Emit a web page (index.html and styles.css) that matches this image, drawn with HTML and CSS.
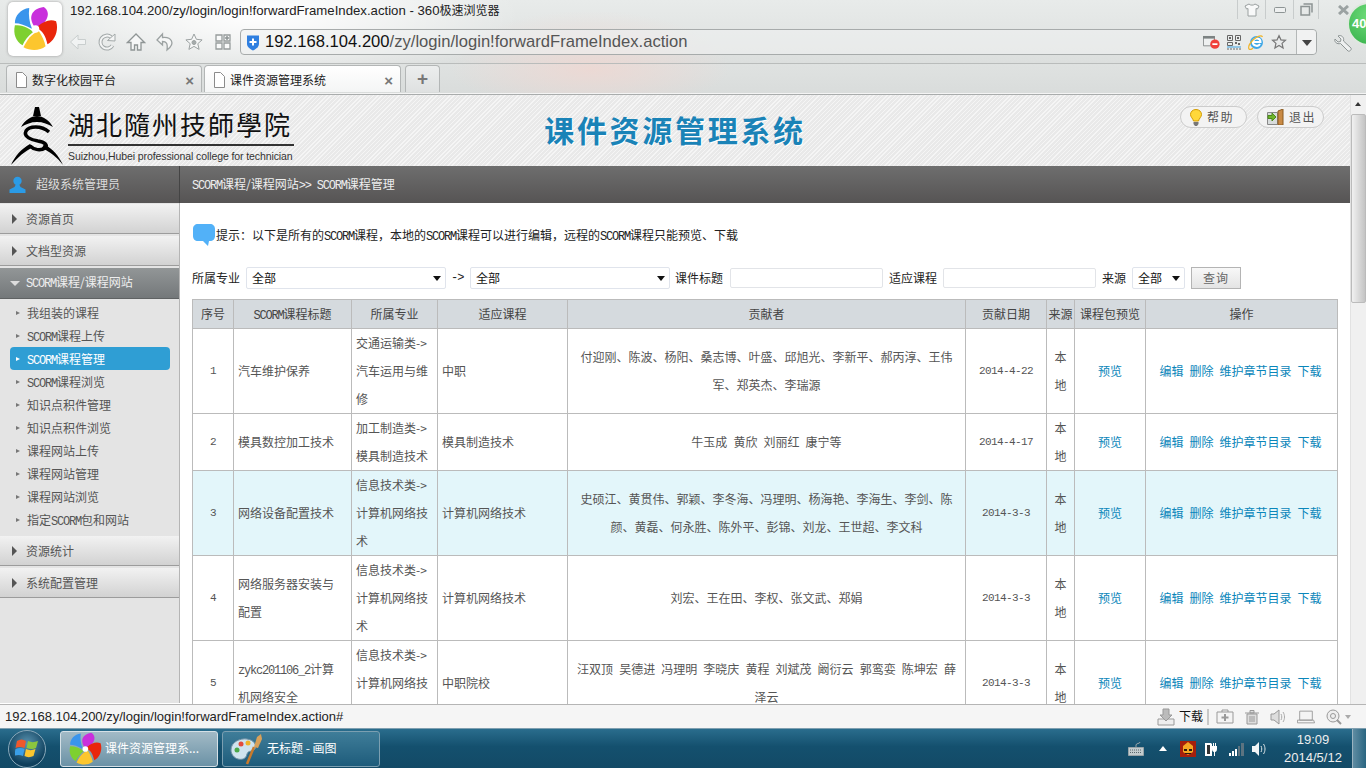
FILE: index.html
```html
<!DOCTYPE html>
<html lang="zh-CN">
<head>
    <meta charset="UTF-8">
    <title>课件资源管理系统</title>
    <link rel="stylesheet" href="styles.css">
</head>
<body>
    <svg class="defs" width="0" height="0">
        <symbol id="pinwheel" viewBox="0 0 48 48">
            <path fill="#c92fdc" d="M23 21C17 12 20 3 33 1c7 4 6 15-6 21z"/>
            <path fill="#e9260b" d="M27 21c6-5 13-8 19-5 3 9-1 20-9 24-2-9-5-14-10-16z"/>
            <path fill="#fcc62e" d="M28 26c3 5 6 10 7 16-6 5-16 5-23 1 4-8 8-14 16-17z"/>
            <path fill="#7ed02f" d="M22 27c-5 4-9 9-11 14C4 37 1 29 3 20c7 0 14 2 19 7z"/>
            <path fill="#3a95ec" d="M21 24C14 20 8 18 3 18 3 10 9 3 18 2c-1 7 0 15 3 22z"/>
            <circle cx="24.500" cy="24" r="4" fill="#fff"/>
        </symbol>
        <symbol id="star" viewBox="0 0 20 20">
            <path d="M10 2l2.400 5.300 5.700.6-4.300 3.800 1.300 5.700L10 14.400l-5.100 3 1.300-5.700L1.900 7.900l5.700-.6z"/>
        </symbol>
    </svg>

    <div class="browser-top">
        <div class="app-logo"><svg width="46" height="46"><use href="#pinwheel"/></svg></div>
        <div class="browser-main">
            <div class="title-row">
                <span class="title-text">192.168.104.200/zy/login/login!forwardFrameIndex.action - 360<span class="title-cn">极速浏览器</span></span>
                <div class="win-btns">
                    <span class="win-btn"><svg width="16" height="14" viewBox="0 0 16 14"><path fill="#f8f9f9" stroke="#9aa0a0" d="M5 1L1 3l1.500 3L4 5.500V13h8V5.500l1.500.5L15 3l-4-2c-1 1.500-5 1.500-6 0z"/></svg></span>
                    <span class="win-btn"><svg width="12" height="6" viewBox="0 0 12 6"><rect x=".5" y=".5" width="11" height="5" rx="1" fill="#eef0f0" stroke="#8d9494"/></svg></span>
                    <span class="win-btn win-btn-last"><svg width="13" height="13" viewBox="0 0 13 13"><path fill="none" stroke="#8d9494" stroke-width="1.500" d="M3.500 1h8.500v8.500M1 3.500h8.500V12H1z"/></svg></span>
                    <span class="win-close"><svg width="11" height="10" viewBox="0 0 11 10"><path stroke="#9ba2a2" stroke-width="3" d="M1 1l9 8M10 1L1 9"/></svg></span>
                </div>
            </div>
            <div class="tool-row">
                <div class="nav-icons">
                    <svg width="20" height="20" viewBox="0 0 20 20"><path fill="#f1f3f3" stroke="#c9cece" d="M10 3L2.500 10l7.500 7v-4.500h7.500v-5H10z"/></svg>
                    <svg width="20" height="20" viewBox="0 0 20 20"><path fill="none" stroke="#a3a9a9" stroke-width="4" d="M15.500 13.500A6.500 6.500 0 1 1 14 5"/><path fill="none" stroke="#f4f5f5" stroke-width="2" d="M15.500 13.500A6.500 6.500 0 1 1 14 5"/><path fill="#f4f5f5" stroke="#a3a9a9" d="M10.500 8.500L18 9V2z"/></svg>
                    <svg width="20" height="20" viewBox="0 0 20 20"><path fill="#f6f7f7" stroke="#8f9595" stroke-width="1.300" d="M10 2L1.500 10.500H5V18h3.500v-5h3v5H15v-7.500h3.500z"/></svg>
                    <svg width="20" height="20" viewBox="0 0 20 20"><path fill="#f6f7f7" stroke="#9ca2a2" stroke-width="1.300" d="M7.500 2L2 8l5.500 5V9.500c3.500 0 5.500 1.500 4.500 8.500 4-3 6-6 4.500-9-1.500-3-5-4-9-3.500z"/></svg>
                    <svg width="20" height="20" viewBox="0 0 20 20" class="star-icon"><use href="#star"/><circle cx="10" cy="10.500" r="2" fill="#a5abab"/></svg>
                    <svg width="20" height="20" viewBox="0 0 20 20"><path fill="#f9fafa" stroke="#969c9c" stroke-width="1.300" d="M3 3h6v6H3zM3 11h6v6H3zM11 11h6v6h-6zM11 3h6v6h-6z"/><path stroke="#8f9595" stroke-width="1.500" d="M14 4v4M12 6h4"/></svg>
                </div>
                <div class="address">
                    <svg class="shield" width="14" height="17" viewBox="0 0 14 17"><path fill="#2f7fe0" d="M1 1.500h12V10c0 3-3 5-6 6.500C4 15 1 13 1 10z"/><path stroke="#fff" stroke-width="2" d="M7 4.500v7M3.500 8h7"/></svg>
                    <span class="url"><b>192.168.104.200</b>/zy/login/login!forwardFrameIndex.action</span>
                    <div class="address-icons">
                        <svg width="17" height="14" viewBox="0 0 20 16"><path fill="#eef0f0" stroke="#7c8282" d="M.5 1.500h13v11H.5z"/><path fill="#7c8282" d="M0 1h14v3H0z"/><circle cx="14" cy="10.500" r="5.500" fill="#f0403a"/><path stroke="#fff" stroke-width="2" d="M11 10.500h6"/></svg>
                        <svg width="14" height="15" viewBox="0 0 14 15"><path fill="none" stroke="#666" d="M.5.500h5v5h-5zM8.500.500h5v5h-5zM.5 7.500h5v3h-5z"/><path fill="#666" d="M2 2h2v2H2zM10 2h2v2h-2zM8 7h2v2H8zM11 8h2v2h-2z"/><path stroke="#3aa0e0" d="M0 12h14"/><path stroke="#666" stroke-dasharray="2 1" d="M0 14h14"/></svg>
                        <svg width="16" height="16" viewBox="0 0 16 16"><circle cx="8.500" cy="8.500" r="6.500" fill="#3ea7e6"/><path fill="none" stroke="#fff" stroke-width="2" d="M4.500 8h8c0-4-6-5-7.500-.5-1 4 5 6 7 2.500"/><path fill="none" stroke="#f0b429" stroke-width="1.200" d="M14.500 3c-1-2-5-1-9 2.500C2 9 0 13 1 15c1 1 3 0 4-1"/></svg>
                        <svg width="16" height="16" viewBox="0 0 20 20" class="addr-star"><use href="#star"/></svg>
                    </div>
                    <span class="address-drop"></span>
                </div>
                <div class="wrench-box">
                    <svg width="18" height="18" viewBox="0 0 18 18"><path fill="#eef0f0" stroke="#8d9494" d="M1 4l3 3 2.500-.5L7 4 4 1c3-1.500 6.500 1 5.500 5L17 13c1 1.500-1.500 4-3 3L6.500 8.500C3 9.500 0 7 1 4z"/></svg>
                </div>
            </div>
        </div>
        <div class="badge">40</div>
    </div>

    <div class="tab-row">
        <div class="tab">
            <svg width="11" height="16" viewBox="0 0 11 16"><path fill="#fff" stroke="#8b8b8b" d="M.5.500h6l4 4v11H.5z"/></svg>
            <span class="tab-name">数字化校园平台</span><span class="tab-x">×</span>
        </div>
        <div class="tab tab-on">
            <svg width="11" height="16" viewBox="0 0 11 16"><path fill="#fff" stroke="#8b8b8b" d="M.5.500h6l4 4v11H.5z"/></svg>
            <span class="tab-name">课件资源管理系统</span><span class="tab-x">×</span>
        </div>
        <div class="tab-add">+</div>
    </div>

    <div class="page">
        <div class="site">
            <header class="site-head">
                <div class="school">
                    <svg class="emblem" width="52" height="58" viewBox="0 0 52 58">
                        <path d="M24 0h4l2 9h-8z"/>
                        <path d="M10 20C14 13 20 9 26 9s12 4 16 11c-5-3-10-5-16-5s-11 2-16 5z"/>
                        <path fill="none" stroke="#000" stroke-width="3.500" d="M38 25C30 18 18 19 15 24c-3 6 6 9 12 10 7 1 10 4 7 7-4 3-11 2-15-2"/>
                        <path d="M0 58c4-9 10-16 19-21l3 3c-8 4-15 10-22 18z"/>
                        <path d="M52 58c-4-9-10-16-19-21l-2 4c8 4 15 9 21 17z"/>
                    </svg>
                    <div class="school-name">
                        <div class="school-cn">湖北隨州技師學院</div>
                        <div class="school-en">Suizhou,Hubei professional college for technician</div>
                    </div>
                </div>
                <h1 class="sys-title">课件资源管理系统</h1>
                <div class="head-btns">
                    <a class="pill">
                        <svg width="12" height="17" viewBox="0 0 12 17"><path fill="#ffd83a" stroke="#d29a00" d="M6 .5C2.500.5.500 3 .5 5.500.5 8 3 9.500 3.500 12h5C9 9.500 11.500 8 11.500 5.500 11.500 3 9.500.5 6 .5z"/><path fill="#777" d="M3.500 13h5v2l-1.500 2H5l-1.500-2z"/></svg>
                        <span>帮助</span>
                    </a>
                    <a class="pill">
                        <svg width="17" height="16" viewBox="0 0 17 16"><path fill="#d8dcdc" stroke="#888" d="M.5 3.500h10v12H.5z"/><path fill="#c98a45" stroke="#8a5a20" d="M11 2l5-2v16h-5z"/><path fill="#6fb52c" stroke="#4c8a1a" d="M1 6.500h4V4l4 4-4 4V9.500H1z"/></svg>
                        <span>退出</span>
                    </a>
                </div>
            </header>

            <div class="layout">
                <aside class="side">
                    <div class="user-bar">
                        <svg width="17" height="17" viewBox="0 0 17 17"><circle cx="8.500" cy="5" r="4.200" fill="#2b9be6"/><path fill="#2b9be6" d="M6.500 9h4l1 2 5 2.500V17H.5v-3.500l5-2.500z"/></svg>
                        <span>超级系统管理员</span>
                    </div>
                    <div class="menu-head"><i class="tri"></i>资源首页</div>
                    <div class="menu-head"><i class="tri"></i>文档型资源</div>
                    <div class="menu-head menu-open"><i class="tri-down"></i><span><span class="en">SCORM</span>课程/课程网站</span></div>
                    <ul class="sub-menu">
                        <li>我组装的课程</li>
                        <li><span class="en">SCORM</span>课程上传</li>
                        <li class="sub-on"><span class="en">SCORM</span>课程管理</li>
                        <li><span class="en">SCORM</span>课程浏览</li>
                        <li>知识点积件管理</li>
                        <li>知识点积件浏览</li>
                        <li>课程网站上传</li>
                        <li>课程网站管理</li>
                        <li>课程网站浏览</li>
                        <li>指定<span class="en">SCORM</span>包和网站</li>
                    </ul>
                    <div class="menu-head"><i class="tri"></i>资源统计</div>
                    <div class="menu-head"><i class="tri"></i>系统配置管理</div>
                </aside>

                <main class="content">
                    <div class="crumb"><span class="en">SCORM</span>课程/课程网站<span class="en">&gt;&gt; SCORM</span>课程管理</div>
                    <div class="content-in">
                        <div class="tip">
                            <svg width="24" height="24" viewBox="0 0 24 24"><path fill="#52b1f8" d="M6 1h12c3 0 5 2 5 5v7c0 3-2 5-5 5h-1l-1 5-5-5H6c-3 0-5-2-5-5V6c0-3 2-5 5-5z"/></svg>
                            <span class="tip-text">提示：以下是所有的<span class="en">SCORM</span>课程，本地的<span class="en">SCORM</span>课程可以进行编辑，远程的<span class="en">SCORM</span>课程只能预览、下载</span>
                        </div>
                        <form class="filter">
                            <label>所属专业</label>
                            <div class="select select-lg"><select><option>全部</option></select></div>
                            <span class="arrow-text">-&gt;</span>
                            <div class="select select-lg"><select><option>全部</option></select></div>
                            <label>课件标题</label>
                            <input class="field" type="text">
                            <label>适应课程</label>
                            <input class="field" type="text">
                            <label>来源</label>
                            <div class="select select-sm"><select><option>全部</option></select></div>
                            <button class="query" type="button">查询</button>
                        </form>
                        <table class="grid">
                            <colgroup>
                                <col class="c1"><col class="c2"><col class="c3"><col class="c4"><col class="c5"><col class="c6"><col class="c7"><col class="c8"><col class="c9">
                            </colgroup>
                            <thead>
                                <tr>
                                    <th>序号</th><th><span class="en">SCORM</span>课程标题</th><th>所属专业</th><th>适应课程</th><th>贡献者</th><th>贡献日期</th><th>来源</th><th>课程包预览</th><th>操作</th>
                                </tr>
                            </thead>
                            <tbody>
                                <tr>
                                    <td class="en mid">1</td><td class="left">汽车维护保养</td><td class="left">交通运输类-&gt;汽车运用与维修</td><td class="left">中职</td>
                                    <td class="mid who">付迎刚、陈波、杨阳、桑志博、叶盛、邱旭光、李新平、郝丙淳、王伟军、郑英杰、李瑞源</td>
                                    <td class="en mid">2014-4-22</td><td class="mid src">本地</td><td class="mid"><a>预览</a></td>
                                    <td class="mid ops"><a>编辑</a><a>删除</a><a>维护章节目录</a><a>下载</a></td>
                                </tr>
                                <tr>
                                    <td class="en mid">2</td><td class="left">模具数控加工技术</td><td class="left">加工制造类-&gt;模具制造技术</td><td class="left">模具制造技术</td>
                                    <td class="mid who">牛玉成 黄欣 刘丽红 康宁等</td>
                                    <td class="en mid">2014-4-17</td><td class="mid src">本地</td><td class="mid"><a>预览</a></td>
                                    <td class="mid ops"><a>编辑</a><a>删除</a><a>维护章节目录</a><a>下载</a></td>
                                </tr>
                                <tr class="row-hot">
                                    <td class="en mid">3</td><td class="left">网络设备配置技术</td><td class="left">信息技术类-&gt;计算机网络技术</td><td class="left">计算机网络技术</td>
                                    <td class="mid who">史硕江、黄贯伟、郭颖、李冬海、冯理明、杨海艳、李海生、李剑、陈颜、黄磊、何永胜、陈外平、彭锦、刘龙、王世超、李文科</td>
                                    <td class="en mid">2014-3-3</td><td class="mid src">本地</td><td class="mid"><a>预览</a></td>
                                    <td class="mid ops"><a>编辑</a><a>删除</a><a>维护章节目录</a><a>下载</a></td>
                                </tr>
                                <tr>
                                    <td class="en mid">4</td><td class="left">网络服务器安装与配置</td><td class="left">信息技术类-&gt;计算机网络技术</td><td class="left">计算机网络技术</td>
                                    <td class="mid who">刘宏、王在田、李权、张文武、郑娟</td>
                                    <td class="en mid">2014-3-3</td><td class="mid src">本地</td><td class="mid"><a>预览</a></td>
                                    <td class="mid ops"><a>编辑</a><a>删除</a><a>维护章节目录</a><a>下载</a></td>
                                </tr>
                                <tr>
                                    <td class="en mid">5</td><td class="left"><span class="en">zykc201106_2</span>计算机网络安全</td><td class="left">信息技术类-&gt;计算机网络技术</td><td class="left">中职院校</td>
                                    <td class="mid who">汪双顶 吴德进 冯理明 李晓庆 黄程 刘斌茂 阚衍云 郭鸾娈 陈坤宏 薛泽云</td>
                                    <td class="en mid">2014-3-3</td><td class="mid src">本地</td><td class="mid"><a>预览</a></td>
                                    <td class="mid ops"><a>编辑</a><a>删除</a><a>维护章节目录</a><a>下载</a></td>
                                </tr>
                            </tbody>
                        </table>
                    </div>
                </main>
            </div>
        </div>
        <div class="scrollbar">
            <div class="scroll-up"></div>
            <div class="scroll-thumb"></div>
        </div>
    </div>

    <div class="status">
        <span class="status-url">192.168.104.200/zy/login/login!forwardFrameIndex.action#</span>
        <div class="status-tools">
            <svg width="18" height="18" viewBox="0 0 18 18"><path fill="#eee" stroke="#999" d="M1 11h16v6H1z"/><path fill="#bbb" stroke="#999" d="M6 1h6v6h3l-6 6-6-6h3z"/></svg>
            <span class="dl-text">下载</span>
            <i class="status-sep"></i>
            <svg width="18" height="15" viewBox="0 0 18 15"><path fill="#f4f4f4" stroke="#999" d="M1 3h16v11H1zM6 3V1h6v2"/><path stroke="#999" stroke-width="2" d="M9 5v7M5.500 8.500h7"/></svg>
            <svg width="14" height="16" viewBox="0 0 14 16"><path fill="#ddd" stroke="#999" d="M2 5h10v10H2zM0 4h14M5 1.500h4V4H5z"/><path stroke="#999" d="M5 7v6M7 7v6M9 7v6"/></svg>
            <svg width="16" height="16" viewBox="0 0 16 16"><path fill="#ddd" stroke="#999" d="M1 5h3l5-4v14l-5-4H1z"/><path fill="none" stroke="#aaa" d="M11 5c1 2 1 4 0 6M13 3c2 3 2 7 0 10"/></svg>
            <svg width="18" height="14" viewBox="0 0 20 14"><path fill="#f4f4f4" stroke="#999" d="M3 .5h14v10H3zM.5 10.500h18l1 3H.5z"/></svg>
            <svg width="16" height="16" viewBox="0 0 16 16"><circle cx="7" cy="7" r="6" fill="#eee" stroke="#999"/><circle cx="7" cy="7" r="2.500" fill="none" stroke="#999"/><path stroke="#999" stroke-width="2" d="M11 11l4 4"/></svg>
            <i class="status-caret"></i>
        </div>
    </div>

    <footer class="taskbar">
        <div class="start-orb">
            <svg width="24" height="22" viewBox="0 0 24 22"><path fill="#f0582c" d="M2 3c3-2 6-2 9 0l-1.500 7c-3-1.500-6-1.500-9 0z"/><path fill="#8cc63f" d="M13 3c3 1.500 6 1.500 10 0l-2 7c-3 1.500-6 1-9.500 0z"/><path fill="#3a9fe8" d="M.5 11c3-1.500 6-1.500 9 0L8 18c-3-1.500-6-1.500-9 0z"/><path fill="#fcc62e" d="M11 11c3 1.500 6 1.500 9.500 0l-2 7c-3 1.500-6.500 1.500-9 0z"/></svg>
        </div>
        <div class="task task-on">
            <svg width="34" height="34"><use href="#pinwheel"/></svg>
            <span>课件资源管理系...</span>
        </div>
        <div class="task">
            <svg width="34" height="32" viewBox="0 0 34 32"><path fill="#cfe3ee" stroke="#6f8fa3" d="M1 17C1 9 10 5 17 6c7 1 10 6 8 10-2 3-7 1-8 5-1 5-5 6-9 5-4-1-7-5-7-9z"/><circle cx="7" cy="17" r="2.500" fill="#4aa84a"/><circle cx="11" cy="11" r="2.500" fill="#e24c3c"/><circle cx="18" cy="10" r="2.500" fill="#f0b429"/><path stroke="#c97a2b" stroke-width="2.500" d="M17 31l7-17"/><path fill="#d9a15a" d="M24 14l3-10 4-3 1 5-4 9z"/></svg>
            <span>无标题 - 画图</span>
        </div>
        <div class="tray">
            <svg width="16" height="14" viewBox="0 0 16 14"><path fill="#c3ccce" stroke="#98a3a7" d="M.5 5.500h15v8H.5z"/><path fill="none" stroke="#98a3a7" d="M8 5V3c0-2 4-1 4-3"/><path stroke="#59676c" stroke-dasharray="1 1" d="M2 8h12M2 10.500h12"/></svg>
            <i class="tray-up"></i>
            <svg class="tray-game" width="16" height="16" viewBox="0 0 16 16"><path fill="#a51f0c" d="M0 0h16v16H0z"/><path fill="#f5a623" d="M3 5l5-4 5 4v6l-5 3-5-3z"/><path fill="#2a1a10" d="M4 8h3v2H4zM9 8h3v2H9zM5 12h6v1H5z"/></svg>
            <svg class="tray-plug" width="14" height="16" viewBox="0 0 14 16"><path fill="#fff" d="M1 2h6l1 1v12H1z"/><path fill="#333" d="M3 4h3v9H3z"/><path fill="#fff" d="M8 5h1V2h1v3h1V2h1v3h1v3c0 2-1 3-2 3v4h-1v-4c-1 0-2-1-2-3z"/></svg>
            <svg class="tray-signal" width="16" height="14" viewBox="0 0 16 14"><path fill="#fff" d="M0 11h2v3H0zM3 9h2v5H3zM6 7h2v7H6z"/><path fill="#5c7380" d="M9 4h2v10H9zM12 1h3v13h-3z"/></svg>
            <svg width="15" height="14" viewBox="0 0 15 14"><path fill="#f2f5f6" d="M0 4h3l4-4v14l-4-4H0z"/><path fill="none" stroke="#dfe6e8" d="M9 4c1 2 1 4 0 6M11.500 2c2 3 2 7 0 10"/></svg>
            <div class="clock"><div>19:09</div><div>2014/5/12</div></div>
            <div class="show-desk"></div>
        </div>
    </footer>
</body>
</html>
```

FILE: styles.css
```css
* {
    margin: 0;
    padding: 0;
    box-sizing: border-box;
}

body {
    width: 1366px;
    height: 768px;
    overflow: hidden;
    display: flex;
    flex-direction: column;
    font: 12px/1.2 "Noto Sans CJK SC", sans-serif;
    color: #444;
    background: #fff;
}

.defs {
    position: absolute;
}

/* 英文数字用窄等宽字 */
.en {
    font-family: "Liberation Mono", "Noto Sans CJK SC", monospace;
    font-size: 12px;
    letter-spacing: -1.200px;
}

/* 浏览器顶部 */
.browser-top {
    position: relative;
    height: 64px;
    display: flex;
    flex-shrink: 0;
    border-bottom: 1px solid #b9bcbb;
    background:
        radial-gradient(ellipse 140px 60px at 590px 70px, rgba(240, 214, 208, .75), transparent),
        radial-gradient(ellipse 260px 70px at 260px 15px, #fff, transparent),
        linear-gradient(#e8ebea, #dcdfde);
}

.app-logo {
    width: 54px;
    height: 54px;
    margin: 2px 6px 0 8px;
    display: flex;
    align-items: center;
    justify-content: center;
    background: #fff;
    border-radius: 5px;
    box-shadow: 0 0 3px #999;
}

.browser-main {
    flex: 1;
    min-width: 0;
}

.title-row {
    height: 27px;
    display: flex;
    justify-content: space-between;
    padding-left: 2px;
}

.title-text {
    font: 13.200px/21px "Liberation Sans", "Noto Sans CJK SC", sans-serif;
    color: #222;
}

.title-cn {
    font-size: 12px;
}

.win-btns {
    display: flex;
    height: 19px;
    padding-right: 10px;
}

.win-btn {
    width: 28px;
    display: flex;
    align-items: center;
    justify-content: center;
    border-left: 1px solid #c8cccc;
}

.win-btn-last {
    width: 26px;
    border-right: 1px solid #c8cccc;
}

.win-close {
    width: 37px;
    display: flex;
    align-items: center;
    padding-left: 19px;
}

.tool-row {
    height: 36px;
    display: flex;
    padding-top: 2px;
}

.nav-icons {
    display: flex;
    gap: 9px;
    height: 26px;
    align-items: center;
}

.star-icon {
    fill: #f6f7f7;
    stroke: #9ca2a2;
}

.address {
    width: 1077px;
    height: 26px;
    margin-left: 7px;
    display: flex;
    align-items: center;
    padding-left: 5px;
    background: rgba(240, 242, 242, .55);
    border: 1px solid #a7abab;
    border-radius: 4px;
}

.shield {
    margin-right: 5px;
}

.url {
    flex: 1;
    font: 16.600px "Liberation Sans", sans-serif;
    color: #555;
}

.url b {
    font-weight: normal;
    color: #111;
}

.address-icons {
    display: flex;
    align-items: center;
    gap: 7px;
    padding-right: 9px;
}

.addr-star {
    fill: #e8eaea;
    stroke: #777;
    stroke-width: 1.500;
}

.address-drop {
    width: 20px;
    height: 100%;
    position: relative;
    background: #f1f2f2;
    border-left: 1px solid #b4b8b8;
    border-radius: 0 4px 4px 0;
}

.address-drop::after {
    content: "";
    position: absolute;
    left: 5px;
    top: 10px;
    border: 5px solid transparent;
    border-top: 6px solid #444;
    border-bottom: 0;
}

.wrench-box {
    width: 49px;
    padding: 6px 0 0 17px;
}

.badge {
    position: absolute;
    left: 1347px;
    top: 2px;
    width: 44px;
    height: 44px;
    padding-left: 3px;
    font: bold 13px/40px "Liberation Sans", sans-serif;
    color: #fff;
    background: radial-gradient(circle at 50% 30%, #6fdc7a, #35b04a);
    border: 2px solid #dfe8df;
    border-radius: 50%;
}

/* 标签栏 */
.tab-row {
    height: 31px;
    flex-shrink: 0;
    display: flex;
    align-items: flex-end;
    gap: 2px;
    padding: 0 0 2px 6px;
    border-bottom: 1px solid #a9acac;
    box-shadow: inset 0 -1px 0 #f4f4f4;
    background:
        radial-gradient(ellipse 140px 40px at 590px 5px, rgba(240, 214, 208, .75), transparent),
        linear-gradient(#dfe2e1, #d9dcdb);
}

.tab {
    width: 196px;
    height: 27px;
    display: flex;
    align-items: center;
    gap: 5px;
    padding: 2px 7px 0 9px;
    color: #222;
    background: linear-gradient(#f1f2f2, #dfe1e1);
    border: 1px solid #b3b6b6;
    border-bottom: 0;
    border-radius: 4px 4px 0 0;
}

.tab-on {
    width: 197px;
    background: linear-gradient(#fff, #f4f5f5);
}

.tab-name {
    flex: 1;
}

.tab-x {
    font: bold 15px "Liberation Sans", sans-serif;
    color: #777;
}

.tab-add {
    width: 35px;
    height: 27px;
    margin-left: 2px;
    text-align: center;
    font: bold 19px/25px "Liberation Sans", sans-serif;
    color: #777;
    background: linear-gradient(#eceeee, #dfe1e1);
    border: 1px solid #b3b6b6;
    border-bottom: 0;
    border-radius: 4px 4px 0 0;
}

/* 页面 */
.page {
    flex: 1;
    min-height: 0;
    display: flex;
    overflow: hidden;
}

.site {
    width: 1350px;
}

.site-head {
    position: relative;
    height: 71px;
    display: flex;
    justify-content: center;
    background: repeating-linear-gradient(135deg, #f5f5f5 0 1px, #e9e9e9 1px 3px);
}

.school {
    position: absolute;
    left: 11px;
    top: 12px;
    display: flex;
    gap: 5px;
}

.school-cn {
    width: 226px;
    font-size: 26px;
    line-height: 33px;
    letter-spacing: 2px;
    white-space: nowrap;
    color: #111;
    border-bottom: 2px solid #333;
    padding-bottom: 4px;
}

.school-en {
    margin-top: 3px;
    font: 10.500px/14px "Liberation Sans", sans-serif;
    letter-spacing: -.1px;
    white-space: nowrap;
    color: #333;
}

.sys-title {
    margin-top: 14px;
    font-size: 30px;
    line-height: 40px;
    letter-spacing: 2.700px;
    font-weight: bold;
    color: #1a83b7;
    text-shadow: 1px 1px 0 #fff;
}

.head-btns {
    position: absolute;
    right: 26px;
    top: 11px;
    display: flex;
    gap: 10px;
}

.pill {
    width: 67px;
    height: 22px;
    display: flex;
    align-items: center;
    gap: 5px;
    padding-left: 9px;
    letter-spacing: 1.500px;
    color: #555;
    background: #f3f3f3;
    border: 1px solid #ccc;
    border-radius: 11px;
}

.layout {
    display: flex;
}

/* 左侧菜单 */
.side {
    width: 180px;
    flex-shrink: 0;
    height: 537px;
    background: #e4e4e4;
    border-right: 1px solid #b5b5b5;
}

.user-bar {
    height: 37px;
    margin-bottom: 1px;
    display: flex;
    align-items: center;
    gap: 10px;
    padding-left: 9px;
    color: #ddd;
    background: linear-gradient(#6e6e6e, #565454);
    border-right: 1px solid #444;
    margin-right: -1px;
}

.menu-head {
    height: 30px;
    margin-bottom: 2px;
    display: flex;
    align-items: center;
    padding: 1px 0 0 12px;
    gap: 9px;
    color: #555;
    background: linear-gradient(#f2f2f2, #d2d2d2);
    border-bottom: 1px solid #9c9c9c;
}

.menu-open {
    height: 31px;
    margin-bottom: 0;
    gap: 6px;
    padding-left: 10px;
    color: #eee;
    background: linear-gradient(#929697, #74787a);
    border-bottom: 1px solid #5f6263;
}

.tri {
    border: 5px solid transparent;
    border-left: 5px solid #555;
    border-right: 0;
}

.tri-down {
    border: 5px solid transparent;
    border-top: 5px solid #ddd;
    border-bottom: 0;
}

.sub-menu {
    list-style: none;
    height: 237px;
    padding: 2px 9px 0 10px;
}

.sub-menu li {
    position: relative;
    height: 23px;
    line-height: 23px;
    padding-left: 17px;
    color: #555;
    border-radius: 4px;
}

.sub-menu li::before {
    content: "";
    position: absolute;
    left: 6px;
    top: 10px;
    width: 4px;
    height: 4px;
    background: #777;
    clip-path: polygon(0 0, 100% 50%, 0 100%);
}

.sub-menu .sub-on {
    color: #fff;
    background: #2f9ed4;
}

.sub-menu .sub-on::before {
    background: #fff;
}

/* 右侧内容 */
.content {
    flex: 1;
    min-width: 0;
}

.crumb {
    height: 37px;
    line-height: 36px;
    padding-left: 12px;
    color: #eee;
    background: linear-gradient(#6e6e6e, #565454);
}

.content-in {
    padding: 20px 13px 0 12px;
}

.tip {
    display: flex;
    align-items: center;
    height: 24px;
    color: #222;
}

.tip-text {
    padding-top: 2px;
}

.filter {
    display: flex;
    align-items: center;
    height: 22px;
    margin-top: 20px;
    color: #222;
}

.select {
    position: relative;
    margin: 0 6px;
}

.select::after {
    content: "";
    position: absolute;
    right: 5px;
    top: 9px;
    border: 4px solid transparent;
    border-top: 5px solid #111;
    border-bottom: 0;
}

.select select {
    width: 100%;
    height: 22px;
    appearance: none;
    padding-left: 5px;
    font: inherit;
    color: #111;
    background: #fff;
    border: 1px solid #e0e4ec;
    border-radius: 2px;
}

.select-lg {
    width: 200px;
    margin-right: 5px;
}

.select-lg + label {
    margin-right: 1px;
}

.select-sm {
    width: 53px;
}

.arrow-text {
    width: 13px;
    font: 12px "Liberation Mono", monospace;
    letter-spacing: -1px;
}

.field {
    width: 153px;
    height: 20px;
    margin: 0 6px;
    background: #fff;
    border: 1px solid #e2e4e8;
    border-radius: 2px;
}

.query {
    width: 50px;
    height: 22px;
    font: inherit;
    letter-spacing: 1px;
    color: #666;
    background: linear-gradient(#f8f8f8, #e4e4e4);
    border: 1px solid #b4b4b4;
}

.grid {
    width: 1145px;
    margin-top: 10px;
    table-layout: fixed;
    border-collapse: collapse;
}

.c1 { width: 41px; }
.c2 { width: 118px; }
.c3 { width: 86px; }
.c4 { width: 130px; }
.c5 { width: 398px; }
.c6 { width: 81px; }
.c7 { width: 28px; }
.c8 { width: 71px; }
.c9 { width: 192px; }

.grid th,
.grid td {
    border: 1px solid #bbb;
    line-height: 28px;
}

.grid th {
    height: 29px;
    font-weight: normal;
    color: #444;
    background: #d5dade;
}

.grid td {
    height: 57px;
    color: #555;
}

.grid .en {
    line-height: 1;
}

.grid td.en {
    font-size: 11px;
    letter-spacing: -.6px;
}

.left {
    padding: 0 8px 0 4px;
    text-align: left;
}

.mid {
    text-align: center;
}

.who {
    padding: 0 9px;
    word-spacing: 3.400px;
}

.src {
    padding: 0 7px;
}

.grid a {
    color: #0a86ba;
}

.ops {
    padding-right: 2px;
}

.ops a {
    margin: 0 3px;
}

.row-hot td {
    background: #e3f6fa;
}

/* 滚动条 */
.scrollbar {
    width: 16px;
    flex-shrink: 0;
    background: #f0f0f0;
    border-left: 1px solid #e2e2e2;
}

.scroll-up {
    position: relative;
    height: 19px;
}

.scroll-up::after {
    content: "";
    position: absolute;
    left: 4px;
    top: 7px;
    border: 3.500px solid transparent;
    border-bottom: 4px solid #333;
    border-top: 0;
}

.scroll-thumb {
    height: 189px;
    background: linear-gradient(90deg, #f1f1f1, #d8d8d8 55%, #c4c4c4);
    border: 1px solid #bbb;
    border-radius: 2px;
}

/* 状态栏 */
.status {
    height: 24px;
    flex-shrink: 0;
    display: flex;
    align-items: center;
    justify-content: space-between;
    padding: 0 15px 0 5px;
    border-top: 1px solid #b5b5b5;
    background: #f5f5f5;
}

.status-url {
    font: 13px "Liberation Sans", sans-serif;
    color: #222;
}

.status-tools {
    display: flex;
    align-items: center;
    gap: 11px;
}

.dl-text {
    margin-left: -7px;
    color: #111;
}

.status-sep {
    width: 2px;
    height: 16px;
    margin: 0 -4px 0 -7px;
    background: #c8c8c8;
}

.status-caret {
    margin-left: -8px;
    border: 3px solid transparent;
    border-top: 4px solid #aaa;
    border-bottom: 0;
}

/* 任务栏 */
.taskbar {
    height: 40px;
    flex-shrink: 0;
    display: flex;
    align-items: center;
    gap: 4px;
    color: #fff;
    background: linear-gradient(#2a6d8d, #14506e 45%, #134a66);
    border-top: 1px solid #7f9fb0;
}

.start-orb {
    width: 38px;
    height: 38px;
    margin: 0 10px 0 8px;
    display: flex;
    align-items: center;
    justify-content: center;
    border-radius: 50%;
    background: radial-gradient(circle at 50% 35%, #5a93b0, #0e3f5c 70%);
    border: 1px solid #8aa9ba;
}

.task {
    width: 158px;
    height: 36px;
    display: flex;
    align-items: center;
    gap: 3px;
    padding-left: 7px;
    font-size: 12px;
    color: #fff;
    background: linear-gradient(#3f7d99, #1e5c7b);
    border: 1px solid #7b9fb1;
    border-radius: 3px;
}

.task-on {
    background: linear-gradient(#a2bac6, #6b92a6);
    border-color: #d5e0e6;
}

.tray {
    margin-left: auto;
    display: flex;
    align-items: center;
    gap: 10px;
    height: 100%;
}

.tray-up {
    margin: 0 3px 0 5px;
    border: 4px solid transparent;
    border-bottom: 5px solid #fff;
    border-top: 0;
}

.tray-game {
    margin-right: -2px;
}

.tray-plug {
    margin-right: 1px;
}

.tray-signal {
    margin-right: -3px;
}

.clock {
    width: 70px;
    margin: 0 -6px 0 1px;
    text-align: center;
    font: 13px/18px "Liberation Sans", sans-serif;
    color: #eee;
}

.show-desk {
    width: 14px;
    height: 100%;
    background: linear-gradient(90deg, #5f8ca2, #2a6581);
    border-left: 1px solid #9ab3c0;
}
```
